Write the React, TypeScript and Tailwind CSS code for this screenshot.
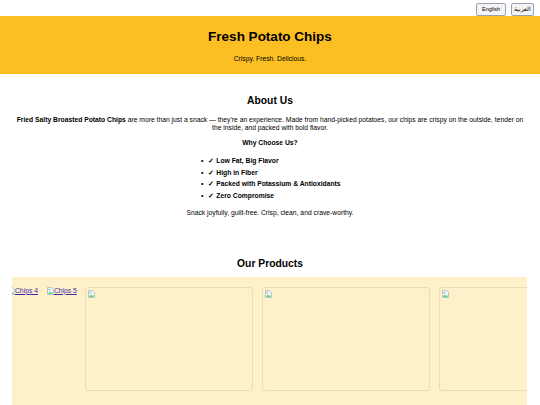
const font = { fontFamily: '"Liberation Sans", Arial, sans-serif' };

const BrokenImg = () => (
  <svg width="7" height="8" viewBox="0 0 7 8" className="shrink-0">
    <path d="M0.5 0.5h4l2 2v5h-6z" fill="#f3f4f6" stroke="#9ca3af" strokeWidth="0.6" />
    <path d="M1 7l2-2.5 1.5 1.5 1-1v2z" fill="#4ade80" />
    <circle cx="2.3" cy="2.8" r="0.8" fill="#60a5fa" />
  </svg>
);

const features = [
  'Low Fat, Big Flavor',
  'High in Fiber',
  'Packed with Potassium & Antioxidants',
  'Zero Compromise',
];

export default function App() {
  return (
    <div className="w-[540px] h-[405px] overflow-hidden bg-white text-black" style={font}>
      {/* lang switch */}
      <div className="h-4 flex justify-end items-start gap-[5px] pr-[6px] pt-[3px]">
        <button className="h-[13px] w-[30px] text-[5.5px] leading-none border border-gray-400 bg-gray-100 rounded-[2px] text-black">English</button>
        <button className="h-[13px] w-[23px] text-[5.5px] leading-none border border-gray-400 bg-gray-100 rounded-[2px] text-black" dir="rtl">العربية</button>
      </div>

      <header className="h-[58px] bg-[#fbbf24] flex flex-col items-center pt-[12px]">
        <h1 className="text-[13.5px] leading-[18px] font-bold">Fresh Potato Chips</h1>
        <p className="text-[6.75px] leading-[9px] mt-[8px]">Crispy. Fresh. Delicious.</p>
      </header>

      <section className="px-[14px] pt-[21px] text-center">
        <h2 className="text-[10.3px] leading-[12px] font-bold">About Us</h2>
        <p className="text-[6.75px] leading-[8px] mt-[9px]">
          <b>Fried Salty Broasted Potato Chips</b> are more than just a snack — they're an experience. Made from hand-picked potatoes, our chips are crispy on the outside, tender on the inside, and packed with bold flavor.
        </p>
        <h3 className="text-[6.75px] leading-[9px] font-bold mt-[6px]">Why Choose Us?</h3>
        <ul className="mt-[8px] flex flex-col items-center">
          <div className="text-left w-[140px] ml-[2px]">
            {features.map(f => (
              <li key={f} className="text-[6.75px] leading-[11.7px] font-bold flex gap-[5px] whitespace-nowrap">
                <span>•</span>
                <span>✓ {f}</span>
              </li>
            ))}
          </div>
        </ul>
        <p className="text-[6.75px] leading-[9px] mt-[6px]">Snack joyfully, guilt-free. Crisp, clean, and crave-worthy.</p>
      </section>

      <section className="pt-[41px]">
        <h2 className="text-[10.3px] leading-[12px] font-bold text-center">Our Products</h2>
        <div className="mt-[7px] mx-[12px] w-[515px] h-[130px] bg-[#fef0c8] overflow-hidden flex items-start gap-[9px] pt-[10px]">
          <a href="#" className="flex items-center text-[6.75px] leading-[8px] text-[#3b2ab0] underline shrink-0 -ml-[4px]">
            <BrokenImg />Chips 4
          </a>
          <a href="#" className="flex items-center text-[6.75px] leading-[8px] text-[#3b2ab0] underline shrink-0 -mr-[1px]">
            <BrokenImg />Chips 5
          </a>
          {[0, 1, 2].map(i => (
            <div key={i} className="w-[168px] h-[104px] border border-[#e8dcbc] rounded-[3px] shrink-0 p-[2px]">
              <BrokenImg />
            </div>
          ))}
        </div>
      </section>
    </div>
  );
}
